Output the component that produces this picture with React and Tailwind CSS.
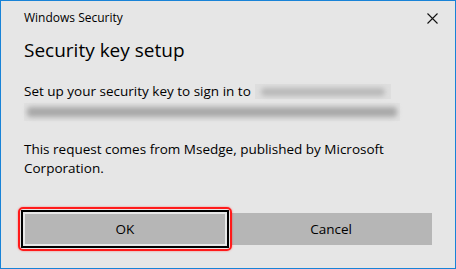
import React from 'react';

function Blur({ className }) {
    return <div className={`rounded-sm bg-[#a9a9a9] blur-[2.5px] ${className}`} />;
}

export default function App() {
    return (
        <div
            className="w-[456px] h-[269px] bg-[#e6e6e6] border border-[#1883d7] flex flex-col text-black"
            style={{ fontFamily: '"Open Sans", "Noto Sans", sans-serif' }}
        >
            {/* title bar */}
            <div className="flex items-center justify-between h-[34px] pl-[23px] pr-[16px]">
                <span className="text-[12px]">Windows Security</span>
                <svg width="11" height="11" viewBox="0 0 11 11" className="mr-[1px]">
                    <path d="M0.5 0.5 L10.5 10.5 M10.5 0.5 L0.5 10.5" stroke="#111" strokeWidth="1.1" />
                </svg>
            </div>

            <h1 className="pl-[23px] text-[19px] leading-[28px] mt-[1px]">Security key setup</h1>

            {/* body */}
            <div className="pl-[23px] pr-[24px] mt-[18px] text-[13.5px] leading-[19px]">
                <div className="flex items-center">
                    <span>Set up your security key to sign in to</span>
                    <div className="ml-[4px] w-[136px] h-[15px] bg-[#dedede] flex items-center px-[6px]">
                        <Blur className="h-[8px] w-full opacity-70" />
                    </div>
                </div>
                <div className="mt-[2px] h-[18px] w-[376px] flex items-center bg-[#e0e0e0] px-[3px]">
                    <Blur className="h-[10px] w-full" />
                </div>
                <p className="mt-[19px]">
                    This request comes from Msedge, published by Microsoft Corporation.
                </p>
            </div>

            {/* buttons */}
            <div className="mt-auto flex gap-[4px] px-[23px] pb-[23px] text-[13.5px]">
                <div className="relative flex-1">
                    <div className="absolute -inset-[6px] rounded-[5px] border-[2.5px] border-[#ff1a1a] shadow-[0_0_2px_rgba(255,0,0,0.5)]" />
                    <button className="relative w-full h-[32px] bg-[#b6b6b6] outline outline-2 outline-black outline-offset-[1px] border border-[#e8e8e8]">
                        OK
                    </button>
                </div>
                <button className="flex-1 h-[32px] bg-[#b6b6b6]">Cancel</button>
            </div>
        </div>
    );
}
